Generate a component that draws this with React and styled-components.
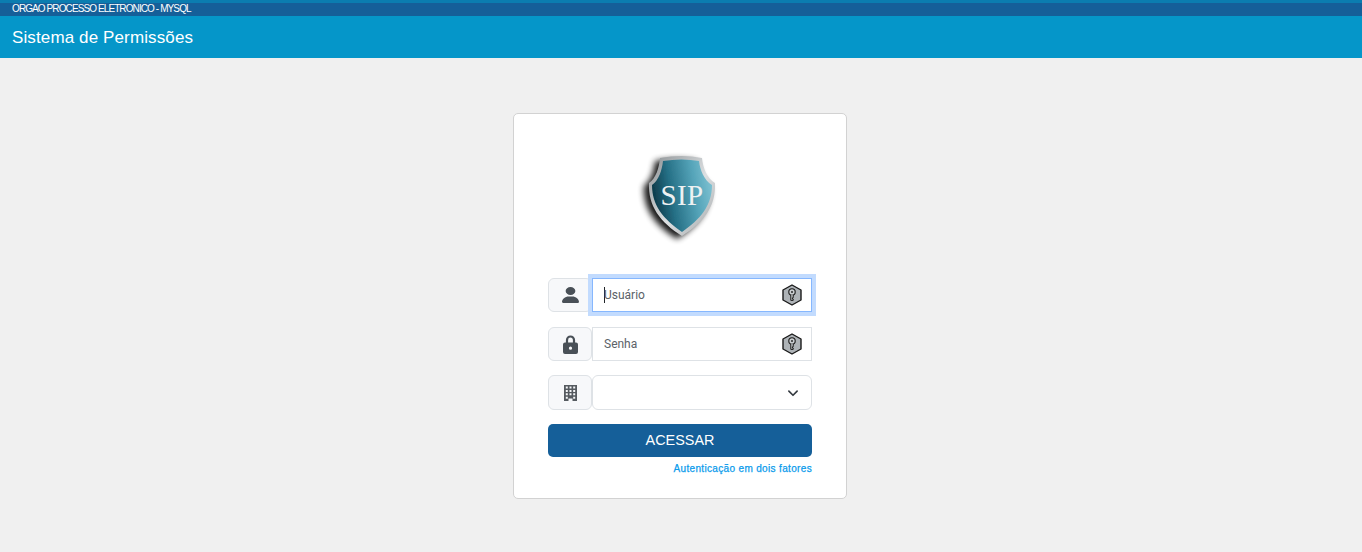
import React from "react";
import styled, { createGlobalStyle } from "styled-components";

const Global = createGlobalStyle`
  html, body { margin: 0; padding: 0; background: #f0f0f0; height: 100%; }
  body { font-family: "Liberation Sans", Arial, sans-serif; }
  * { box-sizing: border-box; }
`;
const Page = styled.div`
  height: 552px;
  overflow: hidden;
  display: flex;
  flex-direction: column;
`;
const Stripe = styled.div`
  height: 3px;
  background: #0b7db0;
`;
const OrgBar = styled.div`
  height: 13px;
  background: #155f99;
  color: #fff;
  font-size: 10px;
  line-height: 11px;
  letter-spacing: -0.9px;
  padding-left: 12px;
`;
const TitleBar = styled.div`
  height: 42px;
  background: #0596c9;
  color: #fff;
  font-size: 17px;
  line-height: 43px;
  letter-spacing: 0.12px;
  padding-left: 12px;
`;
const Main = styled.main`
  display: flex;
  justify-content: center;
  padding: 55px 2px 0 0;
`;
const Card = styled.form`
  width: 334px;
  height: 386px;
  background: #fff;
  border: 1px solid #d2d2d2;
  border-radius: 5px;
  padding: 34px 34px 0;
  display: flex;
  flex-direction: column;
`;
const LogoWrap = styled.div`
  height: 130px;
  display: flex;
  justify-content: center;
  align-items: flex-start;
`;
const Row = styled.div`
  display: flex;
  height: ${p => p.$h || 34}px;
  margin-bottom: ${p => p.$mb}px;
`;
const Addon = styled.div`
  width: 44px;
  flex: none;
  background: #f7f8fa;
  border: 1px solid #dee2e6;
  border-radius: 6px;
  display: flex;
  align-items: center;
  justify-content: center;
  color: #495057;
`;
const Field = styled.div`
  flex: 1;
  position: relative;
  display: flex;
  align-items: center;
  padding: 0 11px;
  background: #fff;
  border: 1px solid ${p => (p.$focus ? "#86b7fe" : "#dee2e6")};
  border-radius: ${p => (p.$round ? "6px" : "0")};
  box-shadow: ${p => (p.$focus ? "0 0 0 4px #c2dbfe" : "none")};
  z-index: ${p => (p.$focus ? 1 : 0)};
  font-family: Roboto, "Liberation Sans", sans-serif;
  font-size: 12px;
  color: #5b6268;
`;
const Caret = styled.span`
  width: 1px;
  height: 16px;
  background: #212529;
  margin-right: -1px;
`;
const KeyBadge = styled.svg`
  position: absolute;
  right: 8px;
  top: 50%;
  transform: translateY(-50%);
`;
const Chevron = styled.svg`
  position: absolute;
  right: 12px;
  top: 50%;
  transform: translateY(-50%);
`;
const Submit = styled.button`
  height: 33px;
  border: 0;
  border-radius: 5px;
  background: #155f99;
  color: #fff;
  font-family: "Liberation Sans", Arial, sans-serif;
  font-size: 14.4px;
  padding: 0 0 1px;
`;
const TwoFactor = styled.a`
  align-self: flex-end;
  margin-top: 5px;
  color: #0a9bec;
  font-size: 10px;
  line-height: 13px;
  letter-spacing: 0.34px;
  -webkit-text-stroke: 0.25px #0a9bec;
  text-decoration: none;
`;
const LogoSvg = styled.svg`
  display: block;
  overflow: visible;
`;

const OUTLINE = "M22 10 Q44 6 64 10 C65 20 69 30 77 35 C78 58 66 74 44 88 C22 74 10 58 11 35 C18 30 21 20 22 10Z";
const INNER = "M25 13 Q44 10 61 13 C62 22 66 32 74 37 C74 57 63 71 44 84 C25 71 14 57 14 37 C21 32 24 22 25 13Z";

const Shield = () => (
  <LogoSvg width="84" height="94" viewBox="0 0 84 94">
    <defs>
      <linearGradient id="sh" x1="0" x2="1" y1="0.45" y2="0.25">
        <stop offset="0" stopColor="#0d3a49" />
        <stop offset="0.3" stopColor="#256f85" />
        <stop offset="0.7" stopColor="#55a4b9" />
        <stop offset="1" stopColor="#80c3d3" />
      </linearGradient>
      <linearGradient id="rim" x1="0" x2="1" y1="0" y2="1">
        <stop offset="0" stopColor="#8c9194" />
        <stop offset="0.55" stopColor="#dde0e2" />
        <stop offset="1" stopColor="#a2a6a8" />
      </linearGradient>
      <filter id="blur" x="-30%" y="-30%" width="160%" height="160%">
        <feGaussianBlur stdDeviation="3" />
      </filter>
      <filter id="soft" x="-5%" y="-5%" width="110%" height="110%">
        <feGaussianBlur stdDeviation="0.4" />
      </filter>
    </defs>
    <path d={OUTLINE} transform="translate(-5,3)" fill="#000" opacity="0.9" filter="url(#blur)" />
    <path d={OUTLINE} fill="url(#rim)" filter="url(#soft)" />
    <path d={INNER} fill="url(#sh)" filter="url(#soft)" />
    <text x="44" y="57" textAnchor="middle" fontFamily="'Liberation Serif', serif" fontSize="29" fill="#eef1f2" letterSpacing="0.3">SIP</text>
  </LogoSvg>
);

const Key = () => (
  <KeyBadge width="22" height="22" viewBox="0 0 22 22">
    <path d="M11 1 L20 6 V16 L11 21 L2 16 V6 Z" fill="#aeb3b7" stroke="#1a1a1a" strokeWidth="1.4" strokeLinejoin="round" />
    <circle cx="11" cy="8" r="3.2" fill="#c9cdd0" stroke="#1a1a1a" strokeWidth="1.1" />
    <circle cx="11" cy="8" r="0.9" fill="#1a1a1a" />
    <path d="M9.800 11 V16.400 H12.200 V15 H11.400 V13.800 H12.200 V11" fill="#c9cdd0" stroke="#1a1a1a" strokeWidth="1" />
  </KeyBadge>
);

export default function App() {
  return (
    <Page>
      <Global />
      <Stripe />
      <OrgBar>ORGAO PROCESSO ELETRONICO - MYSQL</OrgBar>
      <TitleBar>Sistema de Permissões</TitleBar>
      <Main>
        <Card>
          <LogoWrap><Shield /></LogoWrap>
          <Row $mb={15}>
            <Addon>
              <svg width="17" height="16" viewBox="0 0 448 512" preserveAspectRatio="none" fill="currentColor"><path d="M224 256a128 128 0 1 0 0-256 128 128 0 1 0 0 256zm-45.7 48C79.8 304 0 383.8 0 482.3 0 498.7 13.3 512 29.7 512h388.600c16.400 0 29.700-13.300 29.700-29.700C448 383.800 368.200 304 269.700 304h-91.400z" /></svg>
            </Addon>
            <Field $focus><Caret />Usuário<Key /></Field>
          </Row>
          <Row $mb={14}>
            <Addon>
              <svg width="15" height="20" viewBox="0 0 15 20">
                <path d="M4 10 V6 a3.500 3.500 0 0 1 7 0 V10" fill="none" stroke="currentColor" strokeWidth="2.200" />
                <path fillRule="evenodd" fill="currentColor" d="M2 8.500 H13 A2 2 0 0 1 15 10.500 V18 A2 2 0 0 1 13 20 H2 A2 2 0 0 1 0 18 V10.500 A2 2 0 0 1 2 8.500Z M7.500 12.600 a1.600 1.600 0 1 0 0 3.200 a1.600 1.600 0 1 0 0-3.200Z" />
              </svg>
            </Addon>
            <Field>Senha<Key /></Field>
          </Row>
          <Row $h={35} $mb={14}>
            <Addon>
              <svg width="13" height="16" viewBox="0 0 13 16"><path fillRule="evenodd" fill="#565b60" d="M0 0H13V16H8.500V13.500H4.500V16H0Z M1.800 1.500V3.500H3.800V1.500Z M5.500 1.500V3.500H7.500V1.500Z M9.200 1.500V3.500H11.200V1.500Z M1.800 4.900V6.900H3.800V4.900Z M5.500 4.900V6.900H7.500V4.900Z M9.200 4.900V6.900H11.200V4.900Z M1.800 8.300V10.300H3.800V8.300Z M5.500 8.300V10.300H7.500V8.300Z M9.200 8.300V10.300H11.200V8.300Z M1.800 11.700V13.700H3.800V11.700Z M9.200 11.700V13.700H11.200V11.700Z" /></svg>
            </Addon>
            <Field $round>
              <Chevron width="12" height="12" viewBox="0 0 16 16"><path d="M2.500 5.500 L8 11 L13.500 5.500" fill="none" stroke="#343a40" strokeWidth="2.200" strokeLinecap="round" strokeLinejoin="round" /></Chevron>
            </Field>
          </Row>
          <Submit type="button">ACESSAR</Submit>
          <TwoFactor href="#">Autenticação em dois fatores</TwoFactor>
        </Card>
      </Main>
    </Page>
  );
}
